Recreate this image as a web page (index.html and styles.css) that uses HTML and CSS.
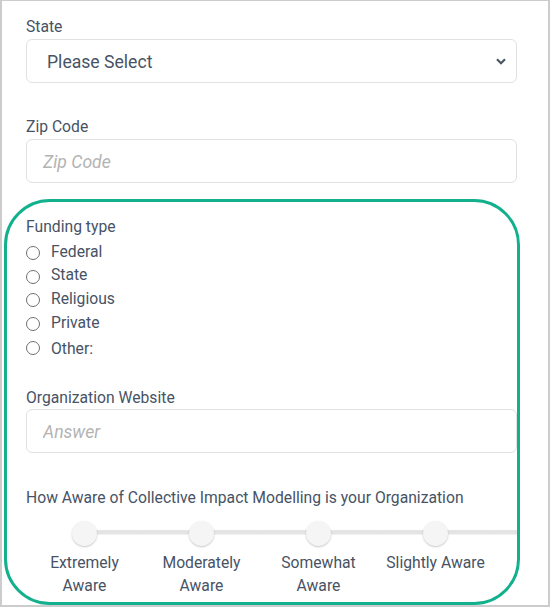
FILE: index.html
```html
<!DOCTYPE html>
<html lang="en">
<head>
<meta charset="utf-8">
<title>Form</title>
<link rel="stylesheet" href="styles.css">
</head>
<body>
<div class="frame">
  <div class="field">
    <label class="label">State</label>
    <div class="select">
      <span>Please Select</span>
      <svg class="chev" width="10" height="7" viewBox="0 0 10 7"><path d="M1 1.2 L5 5.2 L9 1.2" fill="none" stroke="#4b5563" stroke-width="2.2"/></svg>
    </div>
  </div>
  <div class="field zip">
    <label class="label">Zip Code</label>
    <input class="input" type="text" placeholder="Zip Code">
  </div>
  <section class="highlight">
    <div class="funding">
      <div class="label">Funding type</div>
      <label class="radio first-radio"><span class="circle"></span>Federal</label>
      <label class="radio"><span class="circle"></span>State</label>
      <label class="radio"><span class="circle"></span>Religious</label>
      <label class="radio"><span class="circle"></span>Private</label>
      <label class="radio other"><span class="circle"></span>Other:</label>
    </div>
    <div class="field web">
      <label class="label">Organization Website</label>
      <input class="input" type="text" placeholder="Answer">
    </div>
    <div class="question">
      <div class="label">How Aware of Collective Impact Modelling is your Organization</div>
      <div class="scale">
        <div class="opt first"><div class="rail"><span class="track"></span><span class="thumb"></span></div><div class="opt-label">Extremely Aware</div></div>
        <div class="opt"><div class="rail"><span class="track"></span><span class="thumb"></span></div><div class="opt-label">Moderately Aware</div></div>
        <div class="opt"><div class="rail"><span class="track"></span><span class="thumb"></span></div><div class="opt-label">Somewhat Aware</div></div>
        <div class="opt"><div class="rail"><span class="track"></span><span class="thumb"></span></div><div class="opt-label">Slightly Aware</div></div>
        <div class="tail"><span class="track"></span></div>
      </div>
    </div>
  </section>
</div>
</body>
</html>
```
FILE: styles.css
```css
* { box-sizing: border-box; }
html, body { margin: 0; padding: 0; background: #fff; }
body {
  font-family: Roboto, "Liberation Sans", sans-serif;
  color: #475365;
  font-size: 15.7px;
}
.frame {
  width: 550px;
  height: 607px;
  border-style: solid;
  border-color: #cccccc;
  border-width: 1px 2px 2px 2px;
  padding: 14px 31px 0 24px;
  overflow: hidden;
}
.label {
  display: block;
  line-height: 24px;
  font-size: 15.7px;
  color: #475365;
}
.select {
  display: flex;
  align-items: center;
  justify-content: space-between;
  height: 44px;
  border: 1px solid #e1e1e1;
  border-radius: 6px;
  padding: 1px 10px 0 20px;
  font-size: 17.6px;
  color: #475365;
}
.chev { margin-top: 0; }
.zip { margin-top: 32px; }
.input {
  display: block;
  width: 100%;
  height: 44px;
  border: 1px solid #e1e1e1;
  border-radius: 6px;
  padding: 2px 16px 0;
  font-family: Roboto, "Liberation Sans", sans-serif;
  font-size: 17.6px;
  color: #475365;
  outline: none;
  background: #fff;
}
.input::placeholder { color: #b3b3b3; font-style: italic; }
.highlight {
  margin: 16px 0 0 -22px;
  width: 516px;
  height: 406px;
  border: 3px solid #13b08d;
  border-radius: 46px;
  padding: 13px 0 0 19px;
  overflow: hidden;
}
.funding { display: flex; flex-direction: column; }
.radio {
  display: flex;
  align-items: center;
  height: 23.6px;
  line-height: 24px;
  font-size: 15.7px;
}
.first-radio { margin-top: 1px; }
.circle {
  width: 14px;
  height: 14px;
  border: 1.3px solid #707070;
  border-radius: 50%;
  margin-right: 11px;
  margin-top: 3px;
  flex: none;
}
.radio.other { height: 26.6px; align-items: flex-end; }
.radio.other .circle { margin-bottom: 6px; margin-top: 0; }
.web { margin-top: 25px; }
.web .label { margin-bottom: -1px; }
.question { margin-top: 33px; }
.scale {
  display: flex;
  margin-top: 11px;
}
.opt {
  width: 117px;
  flex: none;
  display: flex;
  flex-direction: column;
  align-items: center;
}
.rail {
  width: 100%;
  height: 25px;
  display: grid;
  align-items: start;
}
.track {
  grid-area: 1 / 1;
  display: block;
  height: 4px;
  margin-top: 9px;
  background: #e4e4e4;
  box-shadow: 0 1px 1px rgba(0,0,0,0.06);
  width: 100%;
}
.first .track { margin-left: 50%; width: 50%; }
.tail { width: 60px; flex: none; height: 25px; }
.thumb {
  grid-area: 1 / 1;
  justify-self: center;
  width: 25px;
  height: 25px;
  border-radius: 50%;
  background: #f5f5f5;
  box-shadow: 0 1px 2px rgba(0,0,0,0.22);
}
.opt-label {
  margin-top: 5px;
  text-align: center;
  line-height: 23px;
  font-size: 15.7px;
  width: 100%;
  padding: 0 4px;
}
```
